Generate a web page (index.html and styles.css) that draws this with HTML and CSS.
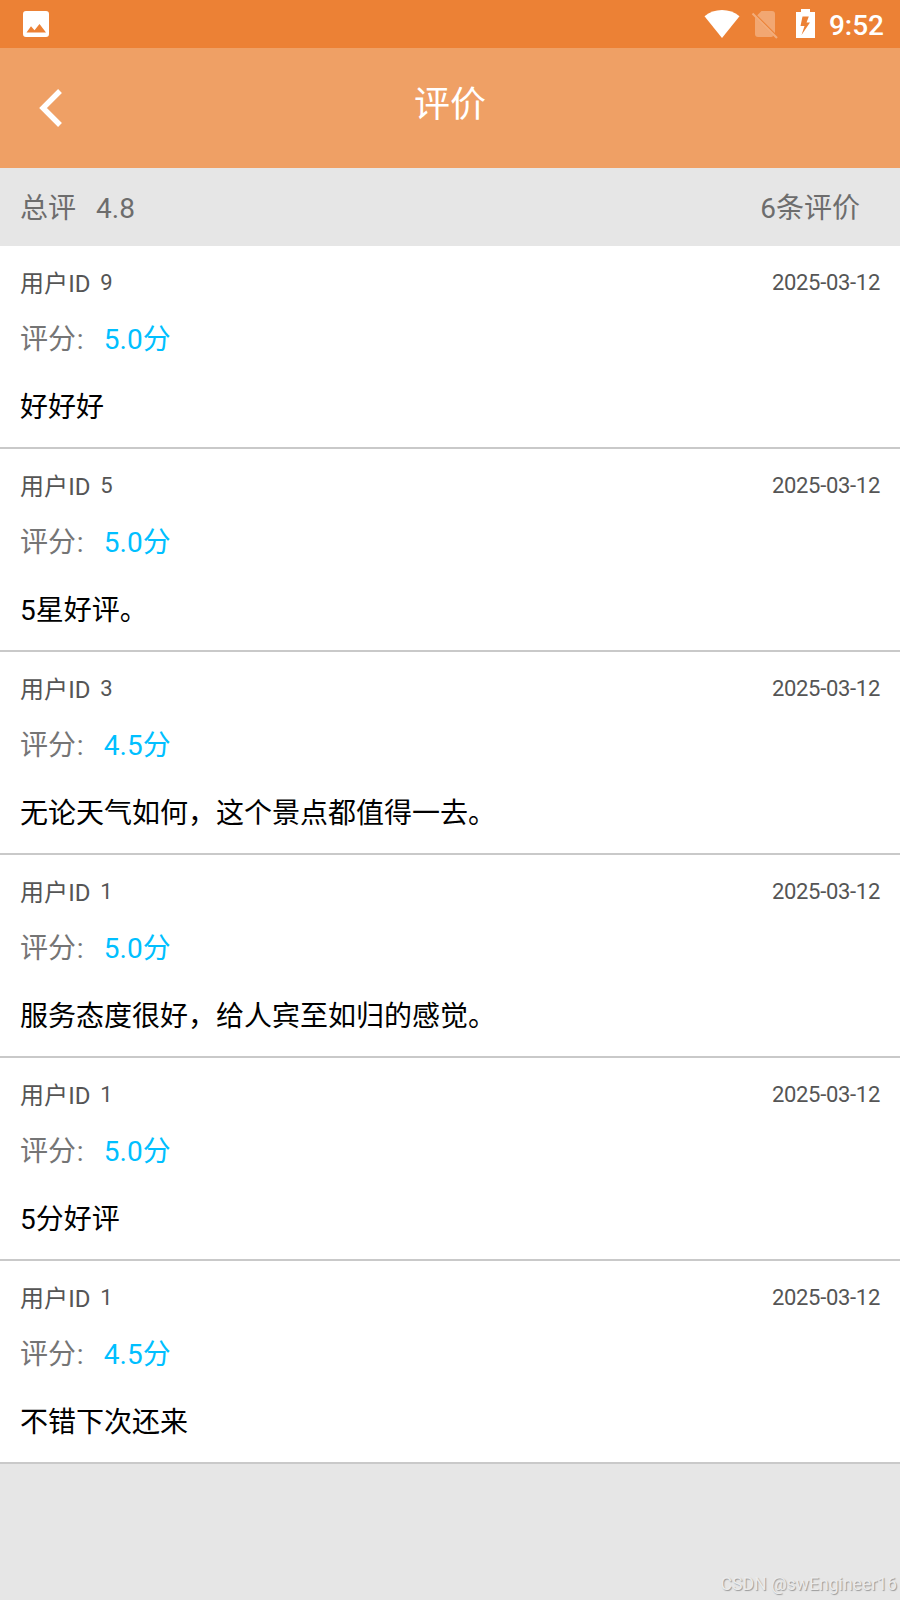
FILE: index.html
```html
<!DOCTYPE html>
<html lang="zh-CN">
<head>
  <meta charset="UTF-8">
  <title>评价</title>
  <link rel="stylesheet" href="styles.css">
</head>
<body>
  <div class="status-bar">
    <svg class="icon-image" width="26" height="26" viewBox="0 0 26 26">
      <path fill="#fff" fill-rule="evenodd" d="M3 0H23Q26 0 26 3V23Q26 26 23 26H3Q0 26 0 23V3Q0 0 3 0ZM3.5 21.5H23L16.5 13L11.5 19.3L8 15.3Z"/>
    </svg>
    <div class="status-icons">
      <svg class="icon-wifi" width="36" height="28" viewBox="0 0 36 28">
        <path fill="#fff" d="M0.5 6.3C10 -2 26 -2 35.5 6.3L18 28Z"/>
      </svg>
      <svg class="icon-sim" width="28" height="30" viewBox="0 0 28 30">
        <path fill="#fff" fill-opacity="0.3" d="M10.5 2H21Q24 2 24 5V24L6.2 6.3ZM4 8.5L22 26.5Q22 28 20 28H7Q4 28 4 25Z"/>
        <path stroke="#fff" stroke-opacity="0.35" stroke-width="2.2" d="M1.5 4.5L26 29"/>
      </svg>
      <svg class="icon-battery" width="19" height="29" viewBox="0 0 19 29">
        <path fill="#fff" fill-rule="evenodd" d="M5 0H14V3H19V29H0V3H5ZM6.5 7.5L4.5 17H8.5L5.5 26L14 13.5H10.5L12.8 7.5Z"/>
      </svg>
      <span class="clock">9:52</span>
    </div>
  </div>

  <div class="header">
    <svg class="back" width="24" height="38" viewBox="0 0 24 38">
      <path d="M21 2L4 19L21 36" fill="none" stroke="#fff" stroke-width="5.4"/>
    </svg>
    <h1>评价</h1>
  </div>

  <div class="summary">
    <span>总评</span>
    <span class="average">4.8</span>
    <span class="count">6条评价</span>
  </div>

  <ul class="comments">
    <li class="comment">
      <div class="info"><span class="label">用户ID</span><span class="user-id">9</span><span class="date">2025-03-12</span></div>
      <div class="score">评分<span class="colon">:</span><span class="value">5.0分</span></div>
      <p class="content">好好好</p>
    </li>
    <li class="comment">
      <div class="info"><span class="label">用户ID</span><span class="user-id">5</span><span class="date">2025-03-12</span></div>
      <div class="score">评分<span class="colon">:</span><span class="value">5.0分</span></div>
      <p class="content">5星好评。</p>
    </li>
    <li class="comment">
      <div class="info"><span class="label">用户ID</span><span class="user-id">3</span><span class="date">2025-03-12</span></div>
      <div class="score">评分<span class="colon">:</span><span class="value">4.5分</span></div>
      <p class="content">无论天气如何，这个景点都值得一去。</p>
    </li>
    <li class="comment">
      <div class="info"><span class="label">用户ID</span><span class="user-id">1</span><span class="date">2025-03-12</span></div>
      <div class="score">评分<span class="colon">:</span><span class="value">5.0分</span></div>
      <p class="content">服务态度很好，给人宾至如归的感觉。</p>
    </li>
    <li class="comment">
      <div class="info"><span class="label">用户ID</span><span class="user-id">1</span><span class="date">2025-03-12</span></div>
      <div class="score">评分<span class="colon">:</span><span class="value">5.0分</span></div>
      <p class="content">5分好评</p>
    </li>
    <li class="comment">
      <div class="info"><span class="label">用户ID</span><span class="user-id">1</span><span class="date">2025-03-12</span></div>
      <div class="score">评分<span class="colon">:</span><span class="value">4.5分</span></div>
      <p class="content">不错下次还来</p>
    </li>
  </ul>

  <div class="watermark">CSDN @swEngineer16</div>
</body>
</html>
```

FILE: styles.css
```css
* {
  box-sizing: border-box;
}
body {
  font-family: Roboto, "Noto Sans CJK SC", sans-serif;
  font-size: 28px;
  background: #e6e6e6;
  margin: 0;
  height: 1600px;
  overflow: hidden;
}
svg {
  display: block;
}
.status-bar {
  display: flex;
  justify-content: space-between;
  height: 48px;
  padding: 0 16px 0 23px;
  background: #ec8135;
}
.icon-image {
  margin-top: 11px;
}
.status-icons {
  display: flex;
}
.icon-wifi {
  margin-top: 10px;
}
.icon-sim {
  margin: 9px 0 0 11px;
}
.icon-battery {
  margin: 9px 0 0 17px;
}
.clock {
  margin-left: 14px;
  line-height: 51px;
  font-weight: 500;
  color: #fff;
}
.header {
  display: flex;
  height: 120px;
  padding: 0 63px 0 39px;
  background: #efa065;
}
.back {
  margin-top: 41px;
}
h1 {
  flex: 1;
  margin: 36px 0 0;
  font-size: 36px;
  font-weight: 400;
  line-height: 42px;
  text-align: center;
  color: #fff;
}
.summary {
  display: flex;
  height: 78px;
  padding: 0 40px 0 20px;
  line-height: 81px;
  color: #6d6d6d;
}
.average {
  margin-left: 20px;
}
.count {
  margin-left: auto;
}
.comments {
  list-style: none;
  margin: 0;
  padding: 0;
}
.comment {
  height: 203px;
  padding: 20px 20px 0;
  background: #fff;
  border-bottom: 2px solid #c9c9c9;
}
.info {
  display: flex;
  align-items: flex-start;
  height: 36px;
  font-size: 22px;
  line-height: 33px;
  color: #555;
}
.label {
  font-size: 24px;
  line-height: 36px;
  letter-spacing: 0.1px;
}
.user-id {
  margin-left: 9.5px;
}
.date {
  margin-left: auto;
  letter-spacing: -0.3px;
}
.score {
  margin-top: 21px;
  line-height: 33px;
  color: #757575;
}
.colon {
  margin-left: 0.7px;
}
.value {
  margin-left: 20.3px;
  color: #00bfff;
}
.content {
  margin: 35px 0 0;
  line-height: 33px;
  color: #000;
}
.watermark {
  position: absolute;
  right: 3px;
  bottom: 5px;
  font-size: 17.6px;
  line-height: 22px;
  color: #ebebeb;
  text-shadow: 1px 1px 1px #999;
}
```
